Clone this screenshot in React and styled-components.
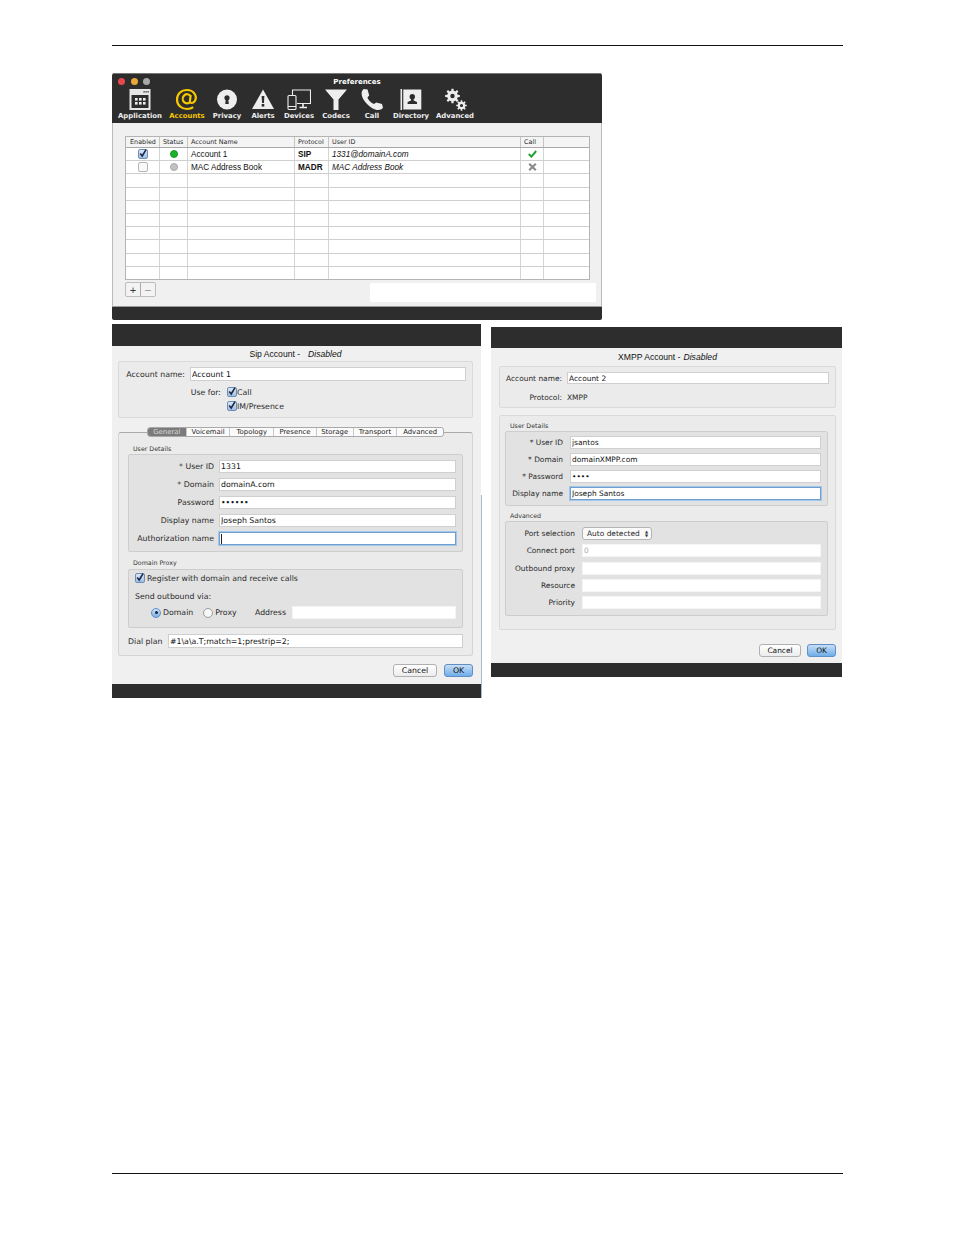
import styled, { createGlobalStyle } from "styled-components";

const UI_FONT = `"DejaVu Sans", "Liberation Sans", sans-serif`;
const TITLE_FONT = `"Liberation Sans", Arial, sans-serif`;

const GlobalStyle = createGlobalStyle`
  html, body {
    margin: 0;
    padding: 0;
    background: #fff;
  }
  * {
    box-sizing: border-box;
  }
`;

const Page = styled.div`
  width: 954px;
  height: 1235px;
  padding: 45px 111px 61px 112px;
  display: flex;
  flex-direction: column;
  font-family: ${UI_FONT};
  font-size: 7.8px;
  color: #2a2a2a;
  overflow: hidden;
`;

const Rule = styled.div`
  height: 1px;
  flex: none;
  background: #111;
  margin-top: ${(p) => (p.$bottom ? "auto" : "0")};
`;

/* preferences window */
const PrefWindow = styled.section`
  width: 490px;
  height: 247px;
  margin-top: 27px;
  flex: none;
  display: flex;
  flex-direction: column;
  background: #f0f0f0;
  border-radius: 3px 3px 2px 2px;
  overflow: hidden;
`;

const PrefHead = styled.header`
  height: 50px;
  background: #2d2d2d;
  border-top: 1px solid #777;
  display: flex;
  flex-direction: column;
  color: #fff;
`;

const TitleRow = styled.div`
  height: 14px;
  display: grid;
  grid-template-columns: 1fr auto 1fr;
  align-items: center;
  padding: 1px 6px 0;
  font-weight: bold;
  font-size: 7px;
`;

const Lights = styled.div`
  display: flex;
  gap: 5.5px;
`;

const Light = styled.span`
  width: 7px;
  height: 7px;
  border-radius: 50%;
  background: ${(p) => p.$color};
`;

const Toolbar = styled.div`
  display: flex;
  padding-left: 7px;
`;

const ToolItem = styled.div`
  width: ${(p) => p.$w}px;
  display: flex;
  flex-direction: column;
  align-items: center;
  gap: 1px;
  font-size: 6.9px;
  font-weight: bold;
  white-space: nowrap;
  color: ${(p) => (p.$active ? "#f6c800" : "#eee")};
`;

const IconBox = styled.svg`
  width: 24px;
  height: 23px;
  display: block;
  flex: none;
`;

const PrefBody = styled.div`
  flex: 1;
  padding: 13px 5px 0 12px;
  border-left: 1px solid #bbb;
  border-right: 1px solid #bbb;
  border-bottom: 1px solid #999;
`;

const Table = styled.div`
  width: 465px;
  height: 144px;
  background: #fff;
  border: 1px solid #b4b4b4;
  display: flex;
  flex-direction: column;
`;

const COLUMNS = "34px 28px 107px 34px 192px 23px 1fr";

const HeadRow = styled.div`
  height: 11px;
  flex: none;
  display: grid;
  grid-template-columns: ${COLUMNS};
  background: #f4f4f4;
  border-bottom: 1px solid #a8a8a8;
  font-size: 6.4px;
  line-height: 10px;
`;

const HeadCell = styled.div`
  padding-left: ${(p) => (p.$center ? 0 : 3)}px;
  text-align: ${(p) => (p.$center ? "center" : "left")};
  white-space: nowrap;
  &:not(:first-child) {
    box-shadow: -1px 0 0 #c4c4c4;
  }
`;

const BodyRow = styled.div`
  flex: 1;
  display: grid;
  grid-template-columns: ${COLUMNS};
  border-bottom: 1px solid #cfcfcf;
  &:last-child {
    border-bottom: none;
  }
`;

const Cell = styled.div`
  display: flex;
  align-items: center;
  justify-content: ${(p) => (p.$center ? "center" : "flex-start")};
  padding-left: ${(p) => (p.$center ? 0 : 3)}px;
  font-family: ${TITLE_FONT};
  font-size: 8.2px;
  font-weight: ${(p) => (p.$bold ? "bold" : "normal")};
  font-style: ${(p) => (p.$italic ? "italic" : "normal")};
  color: #111;
  white-space: nowrap;
  &:not(:first-child) {
    box-shadow: -1px 0 0 #d4d4d4;
  }
`;

const Dot = styled.span`
  width: 8px;
  height: 8px;
  border-radius: 50%;
  background: ${(p) => (p.$on ? "#1eb02a" : "#c2c2c2")};
  border: 1px solid ${(p) => (p.$on ? "#199a24" : "#a9a9a9")};
`;

const TableFoot = styled.div`
  display: flex;
  justify-content: space-between;
  align-items: flex-start;
  margin-top: 2px;
`;

const PlusMinus = styled.div`
  display: flex;
  width: 31px;
  height: 15px;
  border: 1px solid #bdbdbd;
  border-radius: 2px;
  background: #f3f3f3;
  font-size: 9px;
`;

const PlusMinusCell = styled.span`
  flex: 1;
  display: flex;
  align-items: center;
  justify-content: center;
  color: ${(p) => (p.$muted ? "#888" : "#222")};
  border-right: ${(p) => (p.$muted ? "none" : "1px solid #aaa")};
`;

const WhitePatch = styled.div`
  width: 226px;
  height: 19px;
  margin-top: 1px;
  background: #fff;
`;

const DarkBar = styled.div`
  height: ${(p) => p.$h}px;
  flex: none;
  background: #2d2d2d;
`;

/* account dialogs */
const Dialogs = styled.div`
  display: flex;
  align-items: flex-start;
  gap: 10px;
  margin-top: 4px;
`;

const Dialog = styled.section`
  width: ${(p) => p.$w}px;
  margin-top: ${(p) => p.$top || 0}px;
  flex: none;
  position: relative;
  display: flex;
  flex-direction: column;
  background: #f0f0f0;
  font-size: ${(p) => p.$font}px;
  &::after {
    content: "";
    display: ${(p) => (p.$edge ? "block" : "none")};
    position: absolute;
    top: 171px;
    bottom: 0;
    right: -1px;
    width: 1px;
    background: #a9bccf;
  }
`;

const DialogBody = styled.div`
  padding: 0 ${(p) => p.$right}px 0 ${(p) => p.$left}px;
`;

const DialogTitle = styled.div`
  height: ${(p) => p.$h}px;
  display: flex;
  align-items: center;
  justify-content: center;
  gap: ${(p) => p.$gap}px;
  font-family: ${TITLE_FONT};
  font-size: 8.6px;
  color: #111;
  em {
    font-style: italic;
  }
`;

const Box = styled.div`
  border: 1px solid #dadada;
  border-radius: 2px;
  background: #ebebeb;
  padding: ${(p) => p.$pad};
  margin-top: ${(p) => p.$top || 0}px;
`;

const FormRow = styled.div`
  display: grid;
  grid-template-columns: ${(p) => p.$label}px 1fr;
  column-gap: ${(p) => p.$gap || 5}px;
  height: ${(p) => p.$h || 13}px;
  margin-top: ${(p) => p.$top || 0}px;
  align-items: center;
`;

const RowLabel = styled.label`
  text-align: right;
  white-space: nowrap;
`;

const PlainText = styled.span`
  display: flex;
  align-items: center;
  gap: 2px;
  white-space: nowrap;
`;

const TextInput = styled.input`
  width: 100%;
  height: 100%;
  min-width: 0;
  padding: 0 1px;
  margin: 0;
  font: inherit;
  color: ${(p) => (p.$muted ? "#aaa" : "#111")};
  outline: none;
  border-radius: 0;
  background: #fff;
  border: 1px solid ${(p) => (p.$bare ? "#f4f4f4" : p.$focus ? "#6f9fd0" : "#cfcfcf")};
  box-shadow: ${(p) => (p.$focus ? "0 0 0 1px #a6c6e6" : "none")};
  ${(p) =>
    p.$caret &&
    `background: linear-gradient(#222, #222) 1px 1px / 1px 10px no-repeat #fff;`}
`;

const TabBox = styled.div`
  margin-top: 14px;
  border: 1px solid #d4d4d4;
  border-top-color: #aaa;
  border-radius: 3px;
  background: #ebebeb;
  padding: 0 9px 7px;
`;

const TabBar = styled.div`
  display: flex;
  width: 297px;
  height: 10px;
  margin: -6px auto 0;
  background: #fbfbfb;
  border: 1px solid #a9a9a9;
  border-radius: 3px;
  overflow: hidden;
`;

const Tab = styled.div`
  width: ${(p) => p.$w}px;
  display: flex;
  align-items: center;
  justify-content: center;
  font-size: 6.9px;
  color: ${(p) => (p.$active ? "#d8d8d8" : "#222")};
  background: ${(p) => (p.$active ? "#7b7b7b" : "transparent")};
  border-right: 1px solid #c8c8c8;
  &:last-child {
    border-right: none;
  }
`;

const SectionLabel = styled.div`
  height: ${(p) => p.$h}px;
  display: flex;
  align-items: flex-end;
  padding: 0 0 ${(p) => p.$lift || 1}px 5px;
  font-size: 6.3px;
  line-height: 8px;
  color: #333;
`;

const Group = styled.div`
  display: flex;
  flex-direction: column;
  gap: ${(p) => p.$gap || 0}px;
  border: 1px solid #cdcdcd;
  border-radius: 2px;
  background: #e2e2e2;
  padding: ${(p) => p.$pad};
`;

const CheckRow = styled.div`
  display: flex;
  align-items: center;
  gap: ${(p) => p.$gap ?? 2}px;
  height: 14px;
  margin-top: ${(p) => p.$top || 0}px;
`;

const RadioRow = styled.div`
  display: flex;
  align-items: center;
  height: 13px;
  margin-top: 3px;
  padding-left: 16px;
`;

const Radio = styled.span`
  width: 10px;
  height: 10px;
  flex: none;
  border-radius: 50%;
  margin-left: ${(p) => p.$left || 0}px;
  margin-right: 2px;
  display: flex;
  align-items: center;
  justify-content: center;
  border: 1px solid ${(p) => (p.$on ? "#5c8fc8" : "#9a9a9a")};
  background: ${(p) => (p.$on ? "linear-gradient(#cfe2f6, #7fb0e2)" : "#f7f7f7")};
  &::after {
    content: "";
    width: 3px;
    height: 3px;
    border-radius: 50%;
    background: ${(p) => (p.$on ? "#123" : "transparent")};
  }
`;

const AddressLabel = styled.span`
  margin: 0 6px 0 auto;
`;

const AddressInput = styled.div`
  width: 164px;
  flex: none;
  height: 13px;
`;

const ButtonRow = styled.div`
  display: flex;
  justify-content: flex-end;
  gap: ${(p) => p.$gap}px;
  margin-top: ${(p) => p.$top}px;
  padding-bottom: ${(p) => p.$bottom}px;
`;

const DialogButton = styled.button`
  width: ${(p) => p.$w}px;
  height: 13px;
  padding: 0 0 1px;
  font: inherit;
  color: #111;
  border-radius: 3px;
  border: 1px solid ${(p) => (p.$primary ? "#5f8fc4" : "#b0b0b0")};
  background: ${(p) =>
    p.$primary ? "linear-gradient(#c6def5, #6fadea)" : "linear-gradient(#fff, #ececec)"};
`;

const SelectBox = styled.div`
  width: 70px;
  height: 13px;
  display: flex;
  align-items: center;
  justify-content: space-between;
  padding: 0 3px 0 4px;
  background: #fafafa;
  border: 1px solid #b4b4b4;
  border-radius: 3px;
`;

const Arrows = styled.span`
  font-size: 4px;
  line-height: 4px;
  display: flex;
  flex-direction: column;
  color: #333;
`;

const CheckBox = styled.span`
  width: 10px;
  height: 10px;
  flex: none;
  display: block;
  border: 1px solid ${(p) => (p.$on ? "#6d8db5" : "#b5b5b5")};
  border-radius: 2px;
  background: ${(p) => (p.$on ? "linear-gradient(#dbe8f6, #9dc0e6)" : "#f8f8f8")};
`;

const CheckMark = styled.svg`
  display: block;
  overflow: visible;
`;

function Check({ on = true }) {
  return (
    <CheckBox $on={on}>
      {on && (
        <CheckMark width="8" height="8" viewBox="0 0 10 10">
          <path d="M1.5 4.5 L4 7.5 L8.8 -0.5" fill="none" stroke="#1c2a4a" strokeWidth="2" />
        </CheckMark>
      )}
    </CheckBox>
  );
}

function gearPath(cx, cy, outer, inner, hole, teeth) {
  let d = "";
  const step = (Math.PI * 2) / teeth;
  for (let i = 0; i < teeth; i++) {
    const a = i * step;
    const pts = [
      [inner, a - step * 0.5],
      [inner, a - step * 0.28],
      [outer, a - step * 0.18],
      [outer, a + step * 0.18],
      [inner, a + step * 0.28],
    ];
    pts.forEach(([r, t], j) => {
      const x = (cx + r * Math.cos(t)).toFixed(2);
      const y = (cy + r * Math.sin(t)).toFixed(2);
      d += `${i === 0 && j === 0 ? "M" : "L"}${x} ${y} `;
    });
  }
  d += "Z ";
  d += `M${cx + hole} ${cy} A${hole} ${hole} 0 1 0 ${cx - hole} ${cy} A${hole} ${hole} 0 1 0 ${cx + hole} ${cy} Z`;
  return d;
}

const toolbarIcons = {
  application: (
    <>
      <rect x="1.5" y="1" width="21" height="21" fill="#e6e6e6" />
      <rect x="3.5" y="7" width="17" height="13" fill="#2d2d2d" />
      {[15.5, 17.5, 19.5].map((x) => (
        <rect key={x} x={x} y="3" width="1.2" height="1.6" fill="#444" />
      ))}
      {[7, 11, 15].flatMap((x) =>
        [10, 14].map((y) => <rect key={`${x}-${y}`} x={x} y={y} width="2.6" height="2.6" fill="#eee" />),
      )}
    </>
  ),
  accounts: (
    <path
      d="M15.5 8 A4.3 4.6 0 1 0 15.2 14 M15.7 7 L14.9 13.3 C14.8 15.5 18 15.6 19.6 13.4 C22.6 8.8 19.4 2 12 2 C6 2 2 6.2 2 11.5 C2 17.5 7 21 12 21 C14.5 21 16.6 20.4 18.2 19.2"
      fill="none"
      stroke="#f6c800"
      strokeWidth="2.2"
    />
  ),
  privacy: (
    <>
      <circle cx="12" cy="11.5" r="10" fill="#eee" />
      <circle cx="12" cy="9.8" r="2.6" fill="#2d2d2d" />
      <path d="M10.9 10 h2.2 l0.7 6 h-3.6 z" fill="#2d2d2d" />
    </>
  ),
  alerts: (
    <>
      <path d="M12 1.5 L23 21 H1 Z" fill="#eee" />
      <path d="M10.6 8 h2.8 l-0.5 7 h-1.8 z" fill="#2d2d2d" />
      <rect x="10.7" y="16" width="2.6" height="2.6" fill="#2d2d2d" />
    </>
  ),
  devices: (
    <g fill="none" stroke="#eee" strokeWidth="1.1">
      <path d="M5.5 7 V2 H23.5 V15.5 H10" />
      <path d="M12.5 19.5 H20 M16 15.5 V19.5" strokeWidth="1.6" />
      <rect x="1" y="7.5" width="8" height="14" rx="1" />
      <path d="M1 18.5 H9" />
    </g>
  ),
  codecs: <path d="M1 1.5 H23 L14.5 11.5 V22 H9.5 V11.5 Z" fill="#eee" />,
  call: (
    <path
      d="M3.8 1 L7.6 1.6 L9.2 7.5 L7.4 9.4 C8.8 12.5 11 14.8 14 16 L16.2 14.4 L22 16 L23 19.8 C21 22.5 16.5 22.8 12.3 20.2 C6.5 16.6 1.4 10.5 1.6 5 C1.7 3.5 2.6 2 3.8 1 Z"
      fill="#eee"
    />
  ),
  directory: (
    <>
      <rect x="1.5" y="1" width="1.6" height="21" fill="#eee" />
      <rect x="4.3" y="1.5" width="18" height="20" fill="#eee" />
      <circle cx="13.3" cy="8.7" r="2.7" fill="#2d2d2d" />
      <path d="M12 11 h2.6 v1.4 l3.4 1.6 v2 h-9.4 v-2 l3.4 -1.6 z" fill="#2d2d2d" />
    </>
  ),
  advanced: (
    <>
      <path d={gearPath(9.5, 8, 7.4, 5.3, 2.2, 8)} fill="#eee" fillRule="evenodd" />
      <path d={gearPath(18.5, 17.5, 5.3, 3.8, 1.6, 8)} fill="#eee" fillRule="evenodd" />
    </>
  ),
};

const tools = [
  { key: "application", label: "Application", w: 42 },
  { key: "accounts", label: "Accounts", w: 52, active: true },
  { key: "privacy", label: "Privacy", w: 28 },
  { key: "alerts", label: "Alerts", w: 44 },
  { key: "devices", label: "Devices", w: 28 },
  { key: "codecs", label: "Codecs", w: 46 },
  { key: "call", label: "Call", w: 26 },
  { key: "directory", label: "Directory", w: 52 },
  { key: "advanced", label: "Advanced", w: 36 },
];

const accounts = [
  { on: true, name: "Account 1", protocol: "SIP", user: "1331@domainA.com" },
  { on: false, name: "MAC Address Book", protocol: "MADR", user: "MAC Address Book" },
  ...Array.from({ length: 8 }, () => null),
];

const tabs = [
  ["General", 39],
  ["Voicemail", 44],
  ["Topology", 44],
  ["Presence", 43],
  ["Storage", 37],
  ["Transport", 44],
  ["Advanced", 46],
];

function Preferences() {
  return (
    <PrefWindow>
      <PrefHead>
        <TitleRow>
          <Lights>
            <Light $color="#e5484d" />
            <Light $color="#e8a93a" />
            <Light $color="#a8a8a8" />
          </Lights>
          <span>Preferences</span>
        </TitleRow>
        <Toolbar>
          {tools.map((t) => (
            <ToolItem key={t.key} $w={t.w} $active={t.active}>
              <IconBox viewBox="0 0 24 23">{toolbarIcons[t.key]}</IconBox>
              <span>{t.label}</span>
            </ToolItem>
          ))}
        </Toolbar>
      </PrefHead>
      <PrefBody>
        <Table>
          <HeadRow>
            <HeadCell $center>Enabled</HeadCell>
            <HeadCell>Status</HeadCell>
            <HeadCell>Account Name</HeadCell>
            <HeadCell>Protocol</HeadCell>
            <HeadCell>User ID</HeadCell>
            <HeadCell>Call</HeadCell>
            <HeadCell />
          </HeadRow>
          {accounts.map((a, i) => (
            <BodyRow key={i}>
              <Cell $center>{a && <Check on={a.on} />}</Cell>
              <Cell $center>{a && <Dot $on={a.on} />}</Cell>
              <Cell>{a && a.name}</Cell>
              <Cell $bold>{a && a.protocol}</Cell>
              <Cell $italic>{a && a.user}</Cell>
              <Cell $center>
                {a && (
                  <svg width="9" height="8" viewBox="0 0 9 8">
                    {a.on ? (
                      <path d="M0.8 4 L3.4 6.6 L8.2 1" fill="none" stroke="#23a032" strokeWidth="2" />
                    ) : (
                      <path d="M1.2 0.8 L7.8 7.2 M7.8 0.8 L1.2 7.2" fill="none" stroke="#8c8c8c" strokeWidth="2.2" />
                    )}
                  </svg>
                )}
              </Cell>
              <Cell />
            </BodyRow>
          ))}
        </Table>
        <TableFoot>
          <PlusMinus>
            <PlusMinusCell>+</PlusMinusCell>
            <PlusMinusCell $muted>−</PlusMinusCell>
          </PlusMinus>
          <WhitePatch />
        </TableFoot>
      </PrefBody>
      <DarkBar $h={13} />
    </PrefWindow>
  );
}

function Field({ label, value, type, focus, caret, bare, labelWidth, gap, top, muted }) {
  return (
    <FormRow $label={labelWidth} $gap={gap} $top={top}>
      <RowLabel>{label}</RowLabel>
      <TextInput
        readOnly
        type={type || "text"}
        value={value || ""}
        $focus={focus}
        $caret={caret}
        $bare={bare}
        $muted={muted}
      />
    </FormRow>
  );
}

function SipDialog() {
  const details = [
    { label: "* User ID", value: "1331" },
    { label: "* Domain", value: "domainA.com" },
    { label: "Password", value: "secret", type: "password" },
    { label: "Display name", value: "Joseph Santos" },
    { label: "Authorization name", focus: true, caret: true },
  ];
  return (
    <Dialog $w={369} $font={7.8} $edge>
      <DarkBar $h={22} />
      <DialogBody $left={6} $right={8}>
        <DialogTitle $h={15} $gap={8}>
          <span>Sip Account -</span>
          <em>Disabled</em>
        </DialogTitle>
        <Box $pad="5px 6px 4px 0">
          <FormRow $label={66} $h={14}>
            <RowLabel>Account name:</RowLabel>
            <TextInput readOnly value="Account 1" />
          </FormRow>
          <FormRow $label={102} $gap={6} $h={14} $top={4}>
            <RowLabel>Use for:</RowLabel>
            <CheckRow $gap={0}>
              <Check />
              <PlainText>Call</PlainText>
            </CheckRow>
          </FormRow>
          <FormRow $label={102} $gap={6} $h={14}>
            <span />
            <CheckRow $gap={0}>
              <Check />
              <PlainText>IM/Presence</PlainText>
            </CheckRow>
          </FormRow>
        </Box>
        <TabBox>
          <TabBar>
            {tabs.map(([name, w], i) => (
              <Tab key={name} $w={w} $active={i === 0}>
                {name}
              </Tab>
            ))}
          </TabBar>
          <SectionLabel $h={17}>User Details</SectionLabel>
          <Group $gap={5} $pad="5px 6px 6px 0">
            {details.map((d) => (
              <Field key={d.label} {...d} labelWidth={85} />
            ))}
          </Group>
          <SectionLabel $h={17} $lift={2}>
            Domain Proxy
          </SectionLabel>
          <Group $pad="1px 6px 8px 6px">
            <CheckRow>
              <Check />
              <PlainText>Register with domain and receive calls</PlainText>
            </CheckRow>
            <CheckRow $top={4}>
              <PlainText>Send outbound via:</PlainText>
            </CheckRow>
            <RadioRow>
              <Radio $on />
              <PlainText>Domain</PlainText>
              <Radio $left={10} />
              <PlainText>Proxy</PlainText>
              <AddressLabel>Address</AddressLabel>
              <AddressInput>
                <TextInput readOnly value="" $bare />
              </AddressInput>
            </RadioRow>
          </Group>
          <FormRow $label={34} $gap={6} $h={14} $top={6}>
            <RowLabel>Dial plan</RowLabel>
            <TextInput readOnly value="#1\a\a.T;match=1;prestrip=2;" />
          </FormRow>
        </TabBox>
        <ButtonRow $gap={7} $top={8} $bottom={7}>
          <DialogButton $w={44}>Cancel</DialogButton>
          <DialogButton $w={29} $primary>
            OK
          </DialogButton>
        </ButtonRow>
      </DialogBody>
      <DarkBar $h={14} />
    </Dialog>
  );
}

function XmppDialog() {
  const details = [
    { label: "* User ID", value: "jsantos" },
    { label: "* Domain", value: "domainXMPP.com" },
    { label: "* Password", value: "abcd", type: "password" },
    { label: "Display name", value: "Joseph Santos", focus: true },
  ];
  const advanced = [
    { label: "Connect port", value: "0", bare: true, muted: true },
    { label: "Outbound proxy", bare: true },
    { label: "Resource", bare: true },
    { label: "Priority", bare: true },
  ];
  return (
    <Dialog $w={351} $top={3} $font={7.45}>
      <DarkBar $h={21} />
      <DialogBody $left={8} $right={6}>
        <DialogTitle $h={18} $gap={3}>
          <span>XMPP Account -</span>
          <em>Disabled</em>
        </DialogTitle>
        <Box $pad="5px 6px 3px 0">
          <FormRow $label={62} $h={12}>
            <RowLabel>Account name:</RowLabel>
            <TextInput readOnly value="Account 2" />
          </FormRow>
          <FormRow $label={62} $h={14} $top={6}>
            <RowLabel>Protocol:</RowLabel>
            <PlainText>XMPP</PlainText>
          </FormRow>
        </Box>
        <Box $top={7} $pad="0 7px 13px 5px">
          <SectionLabel $h={15}>User Details</SectionLabel>
          <Group $gap={4} $pad="4px 6px 5px 0">
            {details.map((d) => (
              <Field key={d.label} {...d} labelWidth={57} gap={7} />
            ))}
          </Group>
          <SectionLabel $h={15}>Advanced</SectionLabel>
          <Group $gap={4.25} $pad="5px 6px 6px 0">
            <FormRow $label={69} $gap={7}>
              <RowLabel>Port selection</RowLabel>
              <SelectBox>
                <span>Auto detected</span>
                <Arrows>
                  <span>▲</span>
                  <span>▼</span>
                </Arrows>
              </SelectBox>
            </FormRow>
            {advanced.map((d) => (
              <Field key={d.label} {...d} labelWidth={69} gap={7} />
            ))}
          </Group>
        </Box>
        <ButtonRow $gap={6} $top={14} $bottom={6}>
          <DialogButton $w={42}>Cancel</DialogButton>
          <DialogButton $w={29} $primary>
            OK
          </DialogButton>
        </ButtonRow>
      </DialogBody>
      <DarkBar $h={14} />
    </Dialog>
  );
}

function App() {
  return (
    <Page>
      <GlobalStyle />
      <Rule />
      <Preferences />
      <Dialogs>
        <SipDialog />
        <XmppDialog />
      </Dialogs>
      <Rule $bottom />
    </Page>
  );
}

export default App;
